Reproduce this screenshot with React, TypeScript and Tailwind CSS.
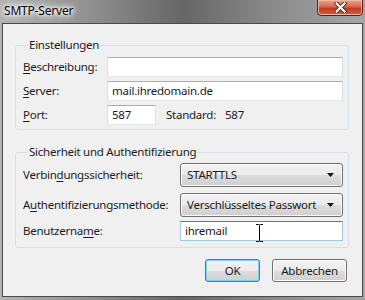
import React from 'react';

const tbBorder = 'border border-x-[#dbdfe6] border-t-[#abadb3] border-b-[#e3e9ef]';
const tbFocus = 'border border-x-[#a4c9e3] border-t-[#3d7bad] border-b-[#a4c9e3]';

function TextBox({ value = '', focused = false, className = '' }: { value?: string; focused?: boolean; className?: string }) {
  return (
    <div className={`relative h-[20px] bg-white flex items-center px-[4px] ${focused ? tbFocus : tbBorder} ${className}`}>
      {value}
    </div>
  );
}

function Combo({ value }: { value: string }) {
  return (
    <div className="h-[24px] rounded-[3px] border border-[#707070] bg-[linear-gradient(#f2f2f2,#ebebeb_50%,#dddddd_50%,#cfcfcf)] shadow-[inset_0_0_0_1px_#fcfcfc] flex items-center justify-between pl-[6px] pr-[8px] whitespace-nowrap">
      <span>{value}</span>
      <svg width="7" height="4" viewBox="0 0 7 4">
        <path d="M0 0H7L3.5 4Z" fill="#111" />
      </svg>
    </div>
  );
}

function Label({ text, u }: { text: string; u: number }) {
  return (
    <span className="whitespace-nowrap">
      {text.slice(0, u)}
      <span className="underline underline-offset-[2px]">{text[u]}</span>
      {text.slice(u + 1)}
    </span>
  );
}

function Button({ children, def = false, className = '' }: { children: React.ReactNode; def?: boolean; className?: string }) {
  return (
    <div
      className={`h-[23px] rounded-[3px] border flex items-center justify-center bg-[linear-gradient(#f2f2f2,#ebebeb_50%,#dddddd_50%,#cfcfcf)] ${
        def ? 'border-[#3c7fb1] shadow-[inset_0_0_0_1px_#7fd0f4]' : 'border-[#707070] shadow-[inset_0_0_0_1px_#fcfcfc]'
      } ${className}`}
    >
      {children}
    </div>
  );
}

export default function App() {
  return (
    <div className="relative w-[365px] h-[300px] flex flex-col bg-[linear-gradient(to_right,#b3b3b3,#8f8f8f_25%,#666_50%,#8a8a8a_75%,#a6a6a6)] font-['Noto_Sans',sans-serif] text-[11.5px] tracking-[-0.25px] leading-[16px] text-[#1b1b22]">
      <div className="h-[23px] flex items-start justify-between">
        <span className="ml-[4px] mt-[3px] text-[12px] tracking-[-0.2px] text-black [text-shadow:0_0_8px_#fff,0_0_8px_#fff,0_0_5px_#fff,0_0_3px_#fff]">SMTP-Server</span>
        <div className="mr-[2px] w-[46px] h-[17px] -mt-[1px] rounded-b-[4px] border border-[#5a1e14] bg-[linear-gradient(#eaa58f,#d9664d_45%,#c23a20_55%,#d2603e)] shadow-[inset_0_0_0_1px_#f0b8a4] flex items-center justify-center">
          <svg width="13" height="11" viewBox="0 0 13 11">
            <path d="M2.5 1.5L10.5 9.5M10.5 1.5L2.5 9.5" stroke="#3a2a2a" strokeWidth="4" strokeLinecap="square" />
            <path d="M2.5 1.5L10.5 9.5M10.5 1.5L2.5 9.5" stroke="#fff" strokeWidth="2.2" strokeLinecap="square" />
          </svg>
        </div>
      </div>

      <div className="mx-[2px] h-[274px] border border-[#4a4a4a] bg-[#f0f0f0] flex flex-col">
        <fieldset className="mt-[13px] ml-[12px] w-[334px] rounded-[3px] border border-[#d5dfe5] pl-[7px] pr-[5px] pt-[4px] pb-[4px]">
          <legend className="ml-[5px] px-[1px]">Einstellungen</legend>
          <div className="flex flex-col gap-[4px]">
            <div className="flex items-center">
              <span className="w-[84px]"><Label text="Beschreibung:" u={0} /></span>
              <TextBox className="flex-1" />
            </div>
            <div className="flex items-center">
              <span className="w-[84px]"><Label text="Server:" u={0} /></span>
              <TextBox className="flex-1" value="mail.ihredomain.de" />
            </div>
            <div className="flex items-center">
              <span className="w-[84px]"><Label text="Port:" u={0} /></span>
              <TextBox className="w-[49px]" value="587" />
              <span className="ml-[10px]">Standard:</span>
              <span className="ml-[9px]">587</span>
            </div>
          </div>
        </fieldset>

        <fieldset className="mt-[14px] ml-[12px] w-[334px] rounded-[3px] border border-[#d5dfe5] pl-[7px] pr-[5px] pt-[3px] pb-[6px]">
          <legend className="ml-[5px] px-[1px]">Sicherheit und Authentifizierung</legend>
          <div className="flex flex-col">
            <div className="flex items-center">
              <span className="w-[157px]"><Label text="Verbindungssicherheit:" u={6} /></span>
              <div className="flex-1"><Combo value="STARTTLS" /></div>
            </div>
            <div className="flex items-center mt-[6px]">
              <span className="w-[157px]"><Label text="Authentifizierungsmethode:" u={1} /></span>
              <div className="flex-1"><Combo value="Verschlüsseltes Passwort" /></div>
            </div>
            <div className="flex items-center mt-[4px]">
              <span className="w-[157px]"><Label text="Benutzername:" u={10} /></span>
              <TextBox className="flex-1" value="ihremail" focused />
            </div>
          </div>
        </fieldset>

        <div className="mt-[11px] flex justify-end gap-[12px] pr-[15px]">
          <Button def className="w-[55px]">OK</Button>
          <Button className="w-[75px]">Abbrechen</Button>
        </div>
      </div>

      <svg className="absolute left-[255px] top-[224px]" width="9" height="18" viewBox="0 0 9 18">
        <path d="M1 0.5H3.5Q4.5 0.5 4.5 1.5V16.5Q4.5 17.5 3.5 17.5H1M8 0.5H5.5Q4.5 0.5 4.5 1.5M4.5 16.5Q4.5 17.5 5.5 17.5H8" stroke="#000" strokeWidth="1" fill="none" />
      </svg>
    </div>
  );
}
